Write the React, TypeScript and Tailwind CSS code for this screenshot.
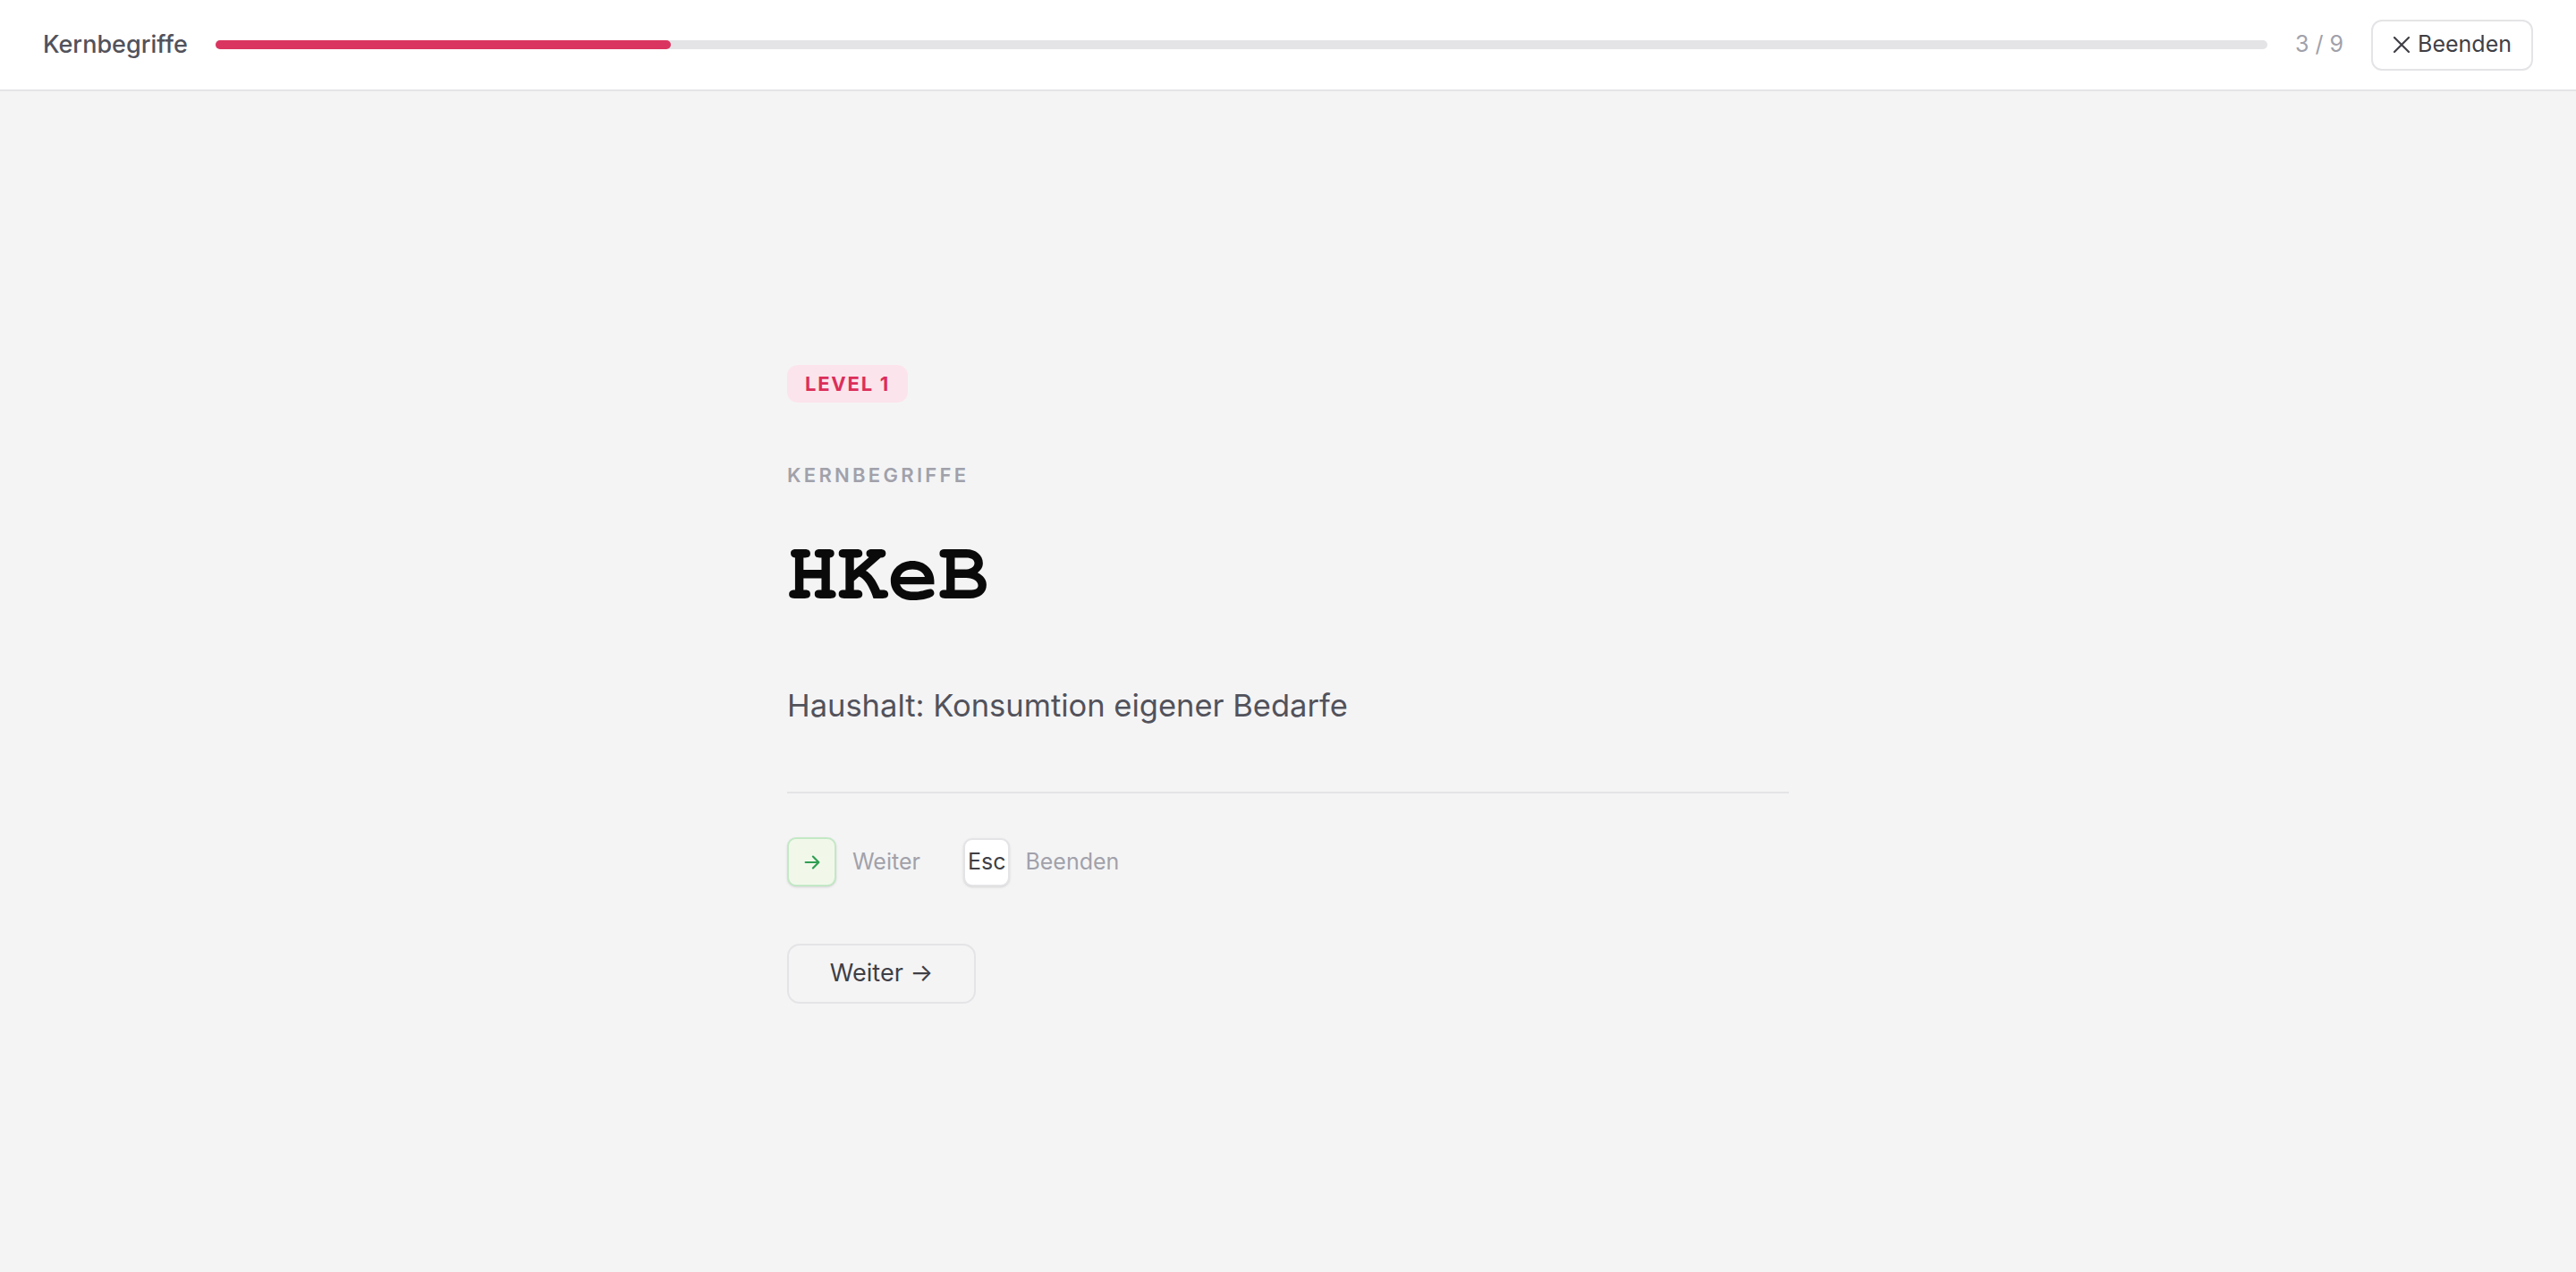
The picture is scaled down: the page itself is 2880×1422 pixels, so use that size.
import React from "react";

const inter = { fontFamily: "Inter, 'Noto Sans', sans-serif" };

export default function App() {
  return (
    <div className="flex h-[1422px] w-full flex-col bg-[#f4f4f5]" style={inter}>
      <header className="flex h-[102px] shrink-0 items-center gap-[31px] border-b-2 border-[#e4e4e7] bg-white px-[48px]">
        <span className="text-[27px] font-medium text-[#52525b]">Kernbegriffe</span>
        <div className="h-[10px] flex-1 rounded-full bg-[#e4e4e7]">
          <div className="h-full w-[22.2%] rounded-full bg-[#da3560]" />
        </div>
        <span className="text-[25px] text-[#a1a1aa]">3 / 9</span>
        <button className="flex h-[57px] items-center gap-[8px] rounded-[12px] border-2 border-[#e4e4e7] bg-white px-[22px] text-[25px] text-[#3f3f46]">
          <svg width="20" height="20" viewBox="0 0 20 20" fill="none" stroke="#3f3f46" strokeWidth="2.2" strokeLinecap="round">
            <path d="M2 2 L18 18 M18 2 L2 18" />
          </svg>
          Beenden
        </button>
      </header>
      <main className="flex flex-1 items-center justify-center pt-[6px]">
        <div className="flex w-[1120px] flex-col items-start">
          <span className="inline-block h-[42px] rounded-[12px] bg-[#fce4ec] px-[20px] text-[22px] font-bold leading-[42px] tracking-[0.08em] text-[#db2f5a]">
            LEVEL 1
          </span>
          <div className="mt-[65px] text-[22px] font-semibold leading-[33px] tracking-[0.15em] text-[#a1a1aa]">
            KERNBEGRIFFE
          </div>
          <h1
            className="mt-[37px] text-[94px] font-bold leading-[94px] text-[#0a0a0a]"
            style={{ fontFamily: "'Nimbus Mono PS', 'Nimbus Mono L', 'TeX Gyre Cursor', 'FreeMono', 'Courier 10 Pitch', Courier, 'Courier New', monospace" }}
          >
            HKeB
          </h1>
          <p className="mt-[84px] text-[34.5px] leading-[52px] text-[#52525b]">
            Haushalt: Konsumtion eigener Bedarfe
          </p>
          <div className="mt-[70px] h-[2px] w-full bg-[#e4e4e7]" />
          <div className="mt-[49px] flex items-center">
            <span className="flex h-[55px] w-[55px] items-center justify-center rounded-[10px] border-2 border-[#c3e8c5] bg-[#f1f8ea] shadow-sm">
              <svg width="22" height="22" viewBox="0 0 24 24" fill="none" stroke="#2f9e52" strokeWidth="2.4" strokeLinecap="round" strokeLinejoin="round">
                <path d="M4 12h16M13 5l7 7-7 7" />
              </svg>
            </span>
            <span className="ml-[18px] text-[25px] text-[#a1a1aa]">Weiter</span>
            <span className="ml-[48px] flex h-[54px] min-w-[52px] items-center justify-center rounded-[10px] border-2 border-[#e4e4e7] bg-white px-[3px] text-[25px] text-[#3f3f46] shadow-sm">
              Esc
            </span>
            <span className="ml-[17px] text-[25px] text-[#a1a1aa]">Beenden</span>
          </div>
          <button className="mt-[64px] flex h-[67px] w-[211px] items-center justify-center rounded-[14px] border-2 border-[#e4e4e7] bg-[#f4f4f5] text-[27px] text-[#3f3f46]">
            Weiter →
          </button>
        </div>
      </main>
    </div>
  );
}
